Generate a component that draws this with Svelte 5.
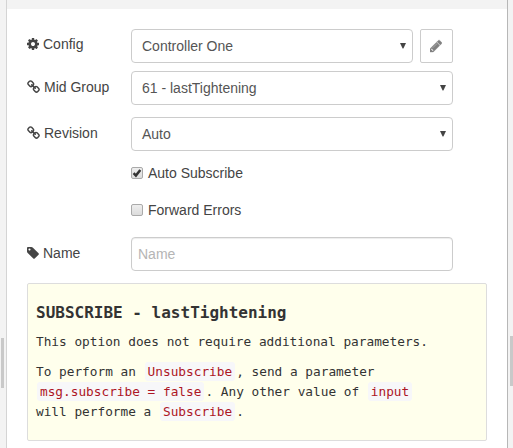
<script>
  const icons = {
    cog: 'M1152 896q0-106-75-181t-181-75-181 75-75 181 75 181 181 75 181-75 75-181zm512-109v222q0 12-8 23t-20 13l-185 28q-19 54-39 91 35 50 107 138 10 12 10 25t-9 23q-27 37-99 108t-94 71q-12 0-26-9l-138-108q-44 23-91 38-16 136-29 186-7 28-36 28h-222q-14 0-24.5-8.5t-11.5-21.5l-28-184q-49-16-90-37l-141 107q-10 9-25 9-14 0-25-11-126-114-165-168-7-10-7-23 0-12 8-23 15-21 51-66.5t54-70.5q-27-50-41-99l-183-27q-13-2-21-12.5t-8-23.5v-222q0-12 8-23t19-13l186-28q14-46 39-92-40-57-107-138-10-12-10-24 0-10 9-23 26-36 98.5-107.5t94.5-71.5q13 0 26 10l138 107q44-23 91-38 16-136 29-186 7-28 36-28h222q14 0 24.5 8.5t11.5 21.5l28 184q49 16 90 37l142-107q9-9 24-9 13 0 25 10 129 119 165 170 7 8 7 22 0 12-8 23-15 21-51 66.5t-54 70.5q26 50 41 98l183 28q13 2 21 12.5t8 23.5z',
    link: 'M1520 1216q0-40-28-68l-208-208q-28-28-68-28-42 0-72 32 3 3 19 18.5t21.5 21.5 15 19 13 25.5 3.5 27.5q0 40-28 68t-68 28q-15 0-27.5-3.5t-25.5-13-19-15-21.5-21.5-18.5-19q-33 31-33 73 0 40 28 68l206 207q27 27 68 27 40 0 68-26l147-146q28-28 28-67zm-703-705q0-40-28-68l-206-207q-28-28-68-28-39 0-68 27l-147 146q-28 28-28 67 0 40 28 68l208 208q27 27 68 27 42 0 72-31-3-3-19-18.5t-21.5-21.5-15-19-13-25.5-3.5-27.5q0-40 28-68t68-28q15 0 27.5 3.5t25.5 13 19 15 21.5 21.5 18.5 19q33-31 33-73zm895 705q0 120-85 203l-147 146q-83 83-203 83-121 0-204-85l-206-207q-83-83-83-203 0-123 88-209l-88-88q-86 88-208 88-120 0-204-84l-208-208q-84-84-84-204t85-203l147-146q83-83 203-83 121 0 204 85l206 207q83 83 83 203 0 123-88 209l88 88q86-88 208-88 120 0 204 84l208 208q84 84 84 204z',
    tag: 'M576 448q0-53-37.5-90.5t-90.5-37.5-90.5 37.5-37.5 90.5 37.5 90.5 90.5 37.5 90.5-37.5 37.5-90.5zm1067 576q0 53-37 90l-491 492q-39 37-91 37-53 0-90-37l-715-716q-38-37-64.5-101t-26.5-117v-416q0-52 38-90t90-38h416q53 0 117 26.5t102 64.5l715 714q37 39 37 91z',
    pencil: 'M491 1536l91-91-235-235-91 91v107h128v128h107zm523-928q0-22-22-22-10 0-17 7l-542 542q-7 7-7 17 0 22 22 22 10 0 17-7l542-542q7-7 7-17zm-54-192l416 416-832 832h-416v-416zm683 96q0 53-37 90l-166 166-416-416 166-165q36-38 90-38 53 0 91 38l235 234q37 39 37 91z'
  };
</script>

{#snippet icon(name, box)}
  <svg class="icon {name}" viewBox={box} aria-hidden="true"><path d={icons[name]} /></svg>
{/snippet}

{#snippet select(value)}
  <div class="field">
    <span>{value}</span>
    <svg class="arrow" viewBox="0 0 6 6"><path d="M0 0h6L3.4 5.6h-.8z" /></svg>
  </div>
{/snippet}

<div class="editor">
  <div class="gutter left"><div class="grip"></div></div>
  <div class="tray">
    <div class="bar"></div>
    <div class="form">
      <div class="row config">
        <div class="label">{@render icon('cog', '128 0 1536 1792')}Config</div>
        {@render select('Controller One')}
        <button class="edit" aria-label="Edit">{@render icon('pencil', '128 0 1536 1792')}</button>
      </div>
      <div class="row group">
        <div class="label">{@render icon('link', '64 0 1664 1792')}Mid Group</div>
        {@render select('61 - lastTightening')}
      </div>
      <div class="row revision">
        <div class="label">{@render icon('link', '64 0 1664 1792')}Revision</div>
        {@render select('Auto')}
      </div>
      <div class="check first">
        <span class="box"><svg viewBox="0 0 12 12"><path d="M2.6 6.2 4.9 8.6 9.3 3" /></svg></span>
        <span>Auto Subscribe</span>
      </div>
      <div class="check">
        <span class="box"></span>
        <span>Forward Errors</span>
      </div>
      <div class="row name">
        <div class="label">{@render icon('tag', '128 0 1536 1792')}Name</div>
        <div class="field input"><span>Name</span></div>
      </div>
      <div class="help">
        <h4>SUBSCRIBE - lastTightening</h4>
        <p>This option does not require additional parameters.</p>
        <p>To perform an <code>Unsubscribe</code>, send a parameter<br /><code>msg.subscribe = false</code>. Any other value of <code>input</code><br />will performe a <code>Subscribe</code>.</p>
      </div>
    </div>
  </div>
  <div class="gutter right"><div class="grip"></div></div>
</div>

<style>
  :global(body) { margin: 0; overflow: hidden; }
  .editor {
    display: flex;
    width: 513px;
    height: 448px;
    background: #f3f3f3;
    font: 14px/20px "Liberation Sans", Arial, sans-serif;
    color: #444;
  }
  .editor * { box-sizing: border-box; }
  .gutter { flex: none; }
  .left { width: 6px; padding: 338px 2px 0 1px; }
  .right { width: 5px; padding: 336px 0 0 2px; }
  .grip { height: 50px; background: #c9c9c9; }
  .tray {
    width: 502px;
    flex: none;
    background: #fff;
    border-left: 1px solid #d4d4d4;
    border-right: 1px solid #b7b7b7;
  }
  .bar { height: 9px; background: #f3f3f3; }
  .form { padding: 20px 20px 0; }
  .row { display: flex; height: 34px; }
  .label {
    width: 104px;
    flex: none;
    height: 20px;
    margin-top: 5px;
    display: flex;
    align-items: center;
    white-space: nowrap;
  }
  .icon { display: block; height: 14px; width: 12px; margin-right: 4px; fill: #444; flex: none; }
  .icon.link { width: 13px; }
  .field {
    width: 322px;
    height: 34px;
    display: flex;
    align-items: center;
    justify-content: space-between;
    padding: 0 6px 0 10px;
    border: 1px solid #ccc;
    border-radius: 4px;
    color: #555;
    background: #fff;
  }
  .config .field { width: 282px; }
  .arrow { width: 6px; height: 6px; fill: #444; }
  .edit {
    width: 33px;
    height: 34px;
    margin-left: 7px;
    padding: 0 1px 1px 0;
    display: flex;
    align-items: center;
    justify-content: center;
    border: 1px solid #ccc;
    border-radius: 2px;
    background: #fff;
  }
  .edit .icon { margin: 0; fill: #808080; stroke: #808080; stroke-width: 50; }
  .group { margin-top: 8px; }
  .group .label { margin-top: 6px; }
  .revision { margin-top: 12px; }
  .revision .label { margin-top: 6px; }
  .check {
    display: flex;
    align-items: center;
    height: 20px;
    margin: 17px 0 0 104px;
    gap: 5px;
  }
  .check.first { margin-top: 12px; }
  .box {
    width: 12px;
    height: 12px;
    border: 1px solid #aaa;
    border-radius: 2px;
    background: linear-gradient(#eee, #dcdcdc);
  }
  .box svg { display: block; width: 12px; height: 12px; margin: -1px; }
  .box path { fill: none; stroke: #333; stroke-width: 2.5; }
  .name { margin-top: 17px; }
  .name .label { margin-top: 6px; }
  .input { padding-left: 6px; color: #b5b5b5; box-shadow: inset 0 1px 1px rgba(0, 0, 0, .075); }
  .help {
    width: 460px;
    height: 158px;
    margin-top: 12px;
    padding: 19px 8px 0;
    border: 1px solid #ddd;
    border-radius: 2px;
    background: #ffffec;
    color: #333;
    font: 12.77px/20px "DejaVu Sans Mono", monospace;
    white-space: nowrap;
  }
  h4 { margin: 0 0 9px; font-size: 16px; line-height: 20px; font-weight: bold; }
  p { margin: 0 0 10px; }
  code {
    font: inherit;
    line-height: 16px;
    margin: 0 1px;
    padding: 2px 3px;
    border-radius: 3px;
    background: #f7f7f9;
    color: #ad1625;
  }
</style>
